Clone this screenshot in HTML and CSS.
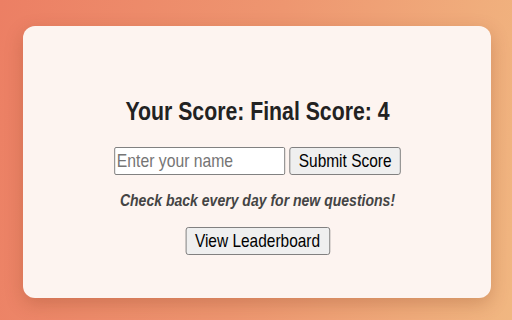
FILE: index.html
```html
<!DOCTYPE html>
<html>
<head>
<meta charset="utf-8">
<link rel="stylesheet" href="styles.css">
</head>
<body>
<div class="page">
  <div class="card">
    <div class="content">
      <h1 class="title">Your Score: Final Score: 4</h1>
      <div class="form-row">
        <input class="name-input" type="text" placeholder="Enter your name">
        <button class="btn btn-submit">Submit Score</button>
      </div>
      <p class="note">Check back every day for new questions!</p>
      <button class="btn btn-board">View Leaderboard</button>
    </div>
  </div>
</div>
</body>
</html>
```

FILE: styles.css
```css
html, body {
  margin: 0;
  padding: 0;
  width: 512px;
  height: 320px;
  overflow: hidden;
}
body {
  font-family: "Liberation Sans", Arial, Helvetica, sans-serif;
  background: linear-gradient(100deg, #ec7f64 0%, #ee9670 50%, #f1b781 100%);
}
.page {
  box-sizing: border-box;
  width: 512px;
  height: 320px;
  padding: 26px 21px 22px 23px;
}
.card {
  box-sizing: border-box;
  height: 272px;
  background: #fdf4f0;
  border-radius: 12px;
  box-shadow: 0 6px 18px rgba(120, 50, 20, 0.25);
  display: flex;
  justify-content: center;
  padding-top: 70px;
}
/* the reference uses a condensed grotesque; narrow Liberation Sans to match */
.content {
  display: flex;
  flex-direction: column;
  align-items: center;
  transform: scaleX(0.85);
  transform-origin: center top;
}
.title {
  margin: 0;
  font-size: 25px;
  line-height: 30px;
  font-weight: bold;
  color: #222;
  white-space: nowrap;
}
.form-row {
  margin-top: 21px;
  display: flex;
  gap: 5px;
}
.name-input {
  box-sizing: border-box;
  width: 201px;
  height: 28px;
  font-family: inherit;
  font-size: 18.5px;
  padding: 0 2px;
  border: 1px solid #767676;
  border-radius: 2px;
  background: #fff;
  color: #222;
}
.name-input::placeholder {
  color: #757575;
}
.btn {
  box-sizing: border-box;
  height: 28px;
  font-family: inherit;
  font-size: 18.2px;
  padding: 0 10px;
  border: 1px solid #767676;
  border-radius: 3px;
  background: #efefef;
  color: #000;
  white-space: nowrap;
}
.btn-submit {
  width: 131px;
}
.note {
  margin: 15px 0 0;
  font-size: 16.5px;
  line-height: 20px;
  font-weight: bold;
  font-style: italic;
  color: #444;
  white-space: nowrap;
}
.btn-board {
  margin-top: 17px;
  width: 170px;
}
```
